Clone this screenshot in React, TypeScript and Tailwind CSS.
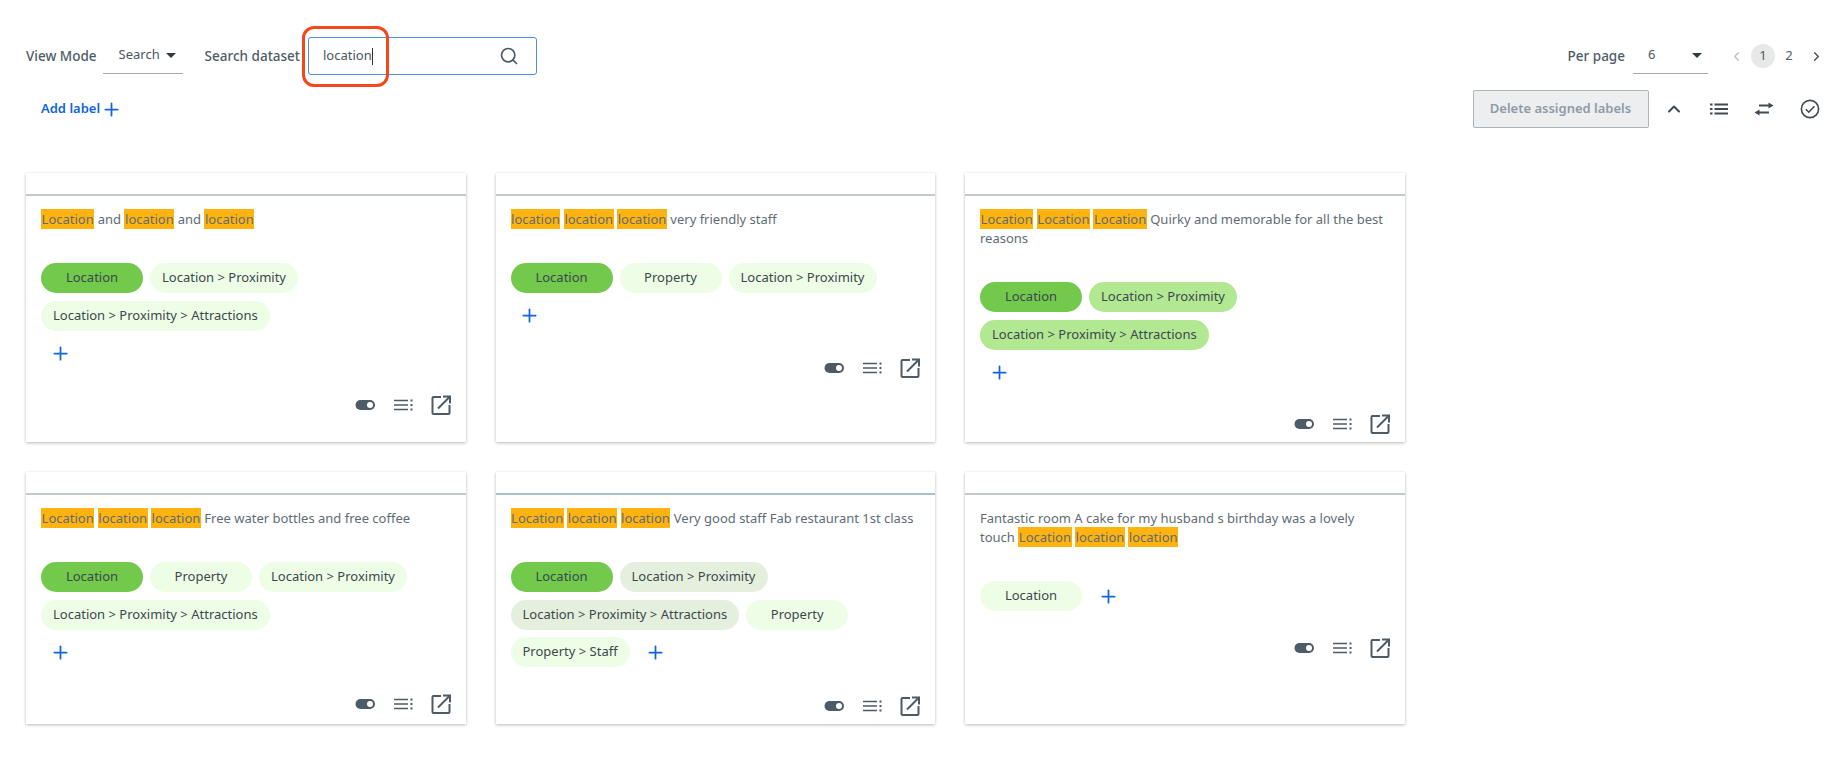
import { ChevronLeft, ChevronRight, ChevronUp, Plus, Search } from "lucide-react";

type Tone = "solid" | "mid" | "hover" | "light";
type Tag = { label: string; tone: Tone };
type Part = { text: string; mark?: boolean };
type Card = { parts: Part[]; tags: Tag[]; hovered?: boolean; plusBelow?: boolean };

const m = (text: string): Part => ({ text, mark: true });
const t = (text: string): Part => ({ text });

const toneClass: Record<Tone, string> = {
  solid: "bg-[#72c94b]",
  mid: "bg-[#b3e893]",
  hover: "bg-[#e4f0dd]",
  light: "bg-[#eefde6]",
};

const cards: Card[] = [
  {
    parts: [m("Location"), t(" and "), m("location"), t(" and "), m("location")],
    tags: [
      { label: "Location", tone: "solid" },
      { label: "Location > Proximity", tone: "light" },
      { label: "Location > Proximity > Attractions", tone: "light" },
    ],
    plusBelow: true,
  },
  {
    parts: [m("location"), t(" "), m("location"), t(" "), m("location"), t(" very friendly staff")],
    tags: [
      { label: "Location", tone: "solid" },
      { label: "Property", tone: "light" },
      { label: "Location > Proximity", tone: "light" },
    ],
    plusBelow: true,
  },
  {
    parts: [
      m("Location"),
      t(" "),
      m("Location"),
      t(" "),
      m("Location"),
      t(" Quirky and memorable for all the best reasons"),
    ],
    tags: [
      { label: "Location", tone: "solid" },
      { label: "Location > Proximity", tone: "mid" },
      { label: "Location > Proximity > Attractions", tone: "mid" },
    ],
    plusBelow: true,
  },
  {
    parts: [m("Location"), t(" "), m("location"), t(" "), m("location"), t(" Free water bottles and free coffee")],
    tags: [
      { label: "Location", tone: "solid" },
      { label: "Property", tone: "light" },
      { label: "Location > Proximity", tone: "light" },
      { label: "Location > Proximity > Attractions", tone: "light" },
    ],
    plusBelow: true,
  },
  {
    parts: [m("Location"), t(" "), m("location"), t(" "), m("location"), t(" Very good staff Fab restaurant 1st class")],
    tags: [
      { label: "Location", tone: "solid" },
      { label: "Location > Proximity", tone: "hover" },
      { label: "Location > Proximity > Attractions", tone: "hover" },
      { label: "Property", tone: "light" },
      { label: "Property > Staff", tone: "light" },
    ],
    hovered: true,
  },
  {
    parts: [
      t("Fantastic room A cake for my husband s birthday was a lovely touch "),
      m("Location"),
      t(" "),
      m("location"),
      t(" "),
      m("location"),
    ],
    tags: [{ label: "Location", tone: "light" }],
  },
];

const ToggleIcon = () => (
  <svg width="24" height="24" viewBox="0 0 24 24" className="text-[#4d5b66]">
    <rect x="2.5" y="7" width="19.5" height="10" rx="5" fill="currentColor" />
    <circle cx="17" cy="12" r="3" fill="#fff" />
  </svg>
);

const RowsIcon = () => (
  <svg width="24" height="24" viewBox="0 0 24 24" className="text-[#4d5b66]">
    <path d="M3 7.5h14M3 12h14M3 16.5h14" stroke="currentColor" strokeWidth="1.6" />
    <path d="M19.5 7.5h2M19.5 12h2M19.5 16.5h2" stroke="currentColor" strokeWidth="1.8" />
  </svg>
);

const LaunchIcon = () => (
  <svg width="24" height="24" viewBox="0 0 24 24" fill="none" className="text-[#4d5b66]">
    <path d="M12 4H4.5a1 1 0 0 0-1 1v15a1 1 0 0 0 1 1h15a1 1 0 0 0 1-1v-8" stroke="currentColor" strokeWidth="2" />
    <path d="M9 15.5 20 4.5M14 3.5h7v7" stroke="currentColor" strokeWidth="2" />
  </svg>
);

const ListIcon = () => (
  <svg width="22" height="22" viewBox="0 0 22 22" className="text-[#3f4a52]">
    <path d="M6.5 6.5H20M6.5 11H20M6.5 15.5H20" stroke="currentColor" strokeWidth="1.8" />
    <path d="M2 6.5h2.5M2 11h2.5M2 15.5h2.5" stroke="currentColor" strokeWidth="1.8" />
  </svg>
);

const SwapIcon = () => (
  <svg width="22" height="22" viewBox="0 0 22 22" className="text-[#3f4a52]">
    <path d="M6 7.5h10M16 14.5H6" stroke="currentColor" strokeWidth="1.8" />
    <path d="M15.5 4.5 20.5 7.5 15.5 10.5ZM6.5 11.5 1.5 14.5 6.5 17.5Z" fill="currentColor" />
  </svg>
);

const CheckCircleIcon = () => (
  <svg width="22" height="22" viewBox="0 0 22 22" fill="none" className="text-[#3f4a52]">
    <circle cx="11" cy="11" r="8.6" stroke="currentColor" strokeWidth="1.6" />
    <path d="m6.8 11.2 3 3 5.6-6" stroke="currentColor" strokeWidth="1.6" />
  </svg>
);

const Caret = () => <span className="h-0 w-0 border-x-[5px] border-t-[5px] border-x-transparent border-t-[#2f3a42]" />;

const DatasetCard = ({ card }: { card: Card }) => (
  <div className="flex flex-col bg-white shadow-[0_1px_3px_rgba(0,0,0,0.28)]">
    <div className={`h-[23px] border-b-2 ${card.hovered ? "border-[#a9bfcb]" : "border-[#c3c9cd]"}`} />
    <div className="px-[15px] pt-[14px] pb-[6px]">
      <p className="text-[13px] leading-[19px] text-[#5f6c76]">
        {card.parts.map((part, i) =>
          part.mark ? (
            <mark key={i} className="bg-[#ffb30f] px-[0.6px] py-px text-[#5f6c76]">
              {part.text}
            </mark>
          ) : (
            <span key={i}>{part.text}</span>
          ),
        )}
      </p>
      <div className="mt-[34px] flex flex-wrap gap-x-[7px] gap-y-[7.5px]">
        {card.tags.map((tag, i) => (
          <span
            key={i}
            className={`flex h-[30px] min-w-[102px] items-center justify-center rounded-full px-3 text-[13px] text-[#3b484e] ${toneClass[tag.tone]}`}
          >
            {tag.label}
          </span>
        ))}
        <span className={card.plusBelow ? "w-full" : ""}>
          <span className="flex h-[30px] w-[38px] items-center justify-center">
            <Plus size={21} className="text-[#1264e0]" strokeWidth={2} />
          </span>
        </span>
      </div>
      <div className={`mr-[-2px] flex justify-end gap-[14px] ${card.hovered ? "mt-[27px]" : "mt-[25px]"}`}>
        <ToggleIcon />
        <RowsIcon />
        <LaunchIcon />
      </div>
    </div>
  </div>
);

export default function App() {
  return (
    <div className="min-h-[764px] bg-white pt-[37px] pr-[19px] pl-[26px] font-['Noto_Sans','Open_Sans',sans-serif] text-[13px] text-[#4f5c66]">
      <div className="flex h-[38px] items-center">
        <span className="text-[13.5px] font-medium">View Mode</span>
        <div className="ml-[6px] flex h-[37px] w-[80px] items-center gap-[6px] self-start border-b border-[#a9a9a9] pl-[16px] text-[#4a565f]">
          Search
          <Caret />
        </div>
        <span className="ml-[22px] text-[13.5px] font-medium">Search dataset</span>
        <div className="relative ml-[8px] flex h-[38px] w-[229px] items-center justify-between rounded-[3px] border border-[#4a90e2] pr-[17px] pl-[14px]">
          <span className="flex items-center text-[#4a565f]">
            location
            <span className="h-[17px] w-px bg-[#333]" />
          </span>
          <Search size={20} className="text-[#4d5b66]" />
          <div className="pointer-events-none absolute top-[-12px] left-[-7px] h-[61px] w-[87px] rounded-[12px] border-[3px] border-[#f4471c]" />
        </div>
        <span className="ml-auto text-[13.5px] font-medium">Per page</span>
        <div className="ml-[8px] flex h-[37px] w-[75px] items-center justify-between self-start border-b border-[#a9a9a9] pr-[6px] pl-[15px] text-[#4a565f]">
          6
          <Caret />
        </div>
        <div className="ml-[21px] flex items-center pr-[2px]">
          <ChevronLeft size={15} className="text-[#b8bfc4]" />
          <span className="ml-[7px] flex h-[24px] w-[24px] items-center justify-center rounded-full bg-[#e8e8e8]">1</span>
          <span className="flex h-[24px] w-[28px] items-center justify-center">2</span>
          <ChevronRight size={15} className="ml-[6px] text-[#3f4a52]" />
        </div>
      </div>

      <div className="mt-[15px] flex h-[38px] items-center">
        <span className="ml-[15px] flex items-center gap-[1px] text-[#1264e0]">
          <span className="font-semibold">Add label</span>
          <Plus size={21} strokeWidth={2} />
        </span>
        <button className="ml-auto h-[38px] w-[176px] rounded-[2px] border border-[#aab5bd] bg-[#eceef0] font-semibold text-[#8e9ba6]">
          Delete assigned labels
        </button>
        <div className="ml-[15.5px] flex items-center gap-[23.5px] pr-[5.5px]">
          <ChevronUp size={20} className="text-[#3f4a52]" strokeWidth={2.4} />
          <ListIcon />
          <SwapIcon />
          <CheckCircleIcon />
        </div>
      </div>

      <div className="mt-[45px] grid w-[1378.5px] grid-cols-3 gap-[30px]">
        {cards.map((card, i) => (
          <DatasetCard key={i} card={card} />
        ))}
      </div>
    </div>
  );
}
